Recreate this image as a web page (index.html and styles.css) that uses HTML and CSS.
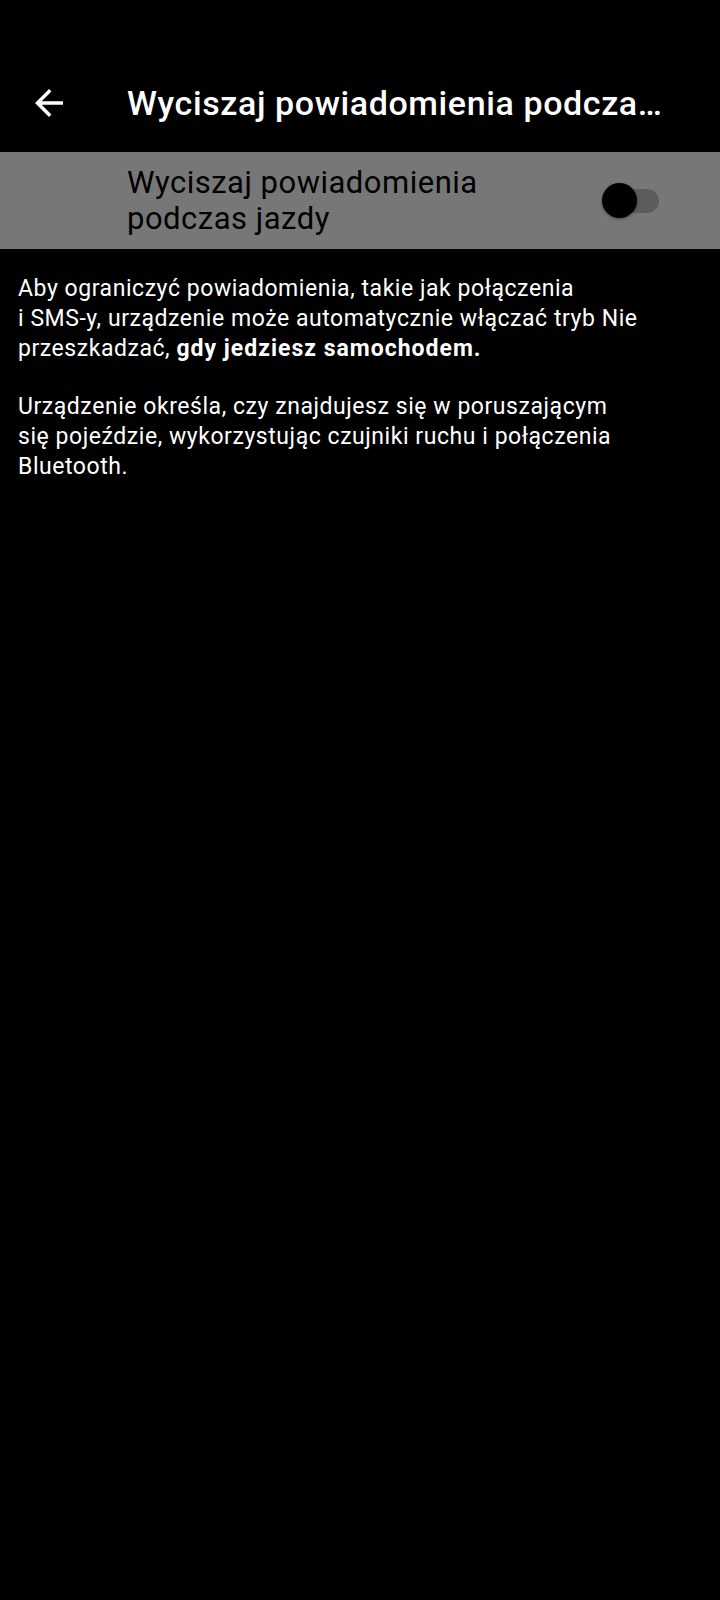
FILE: index.html
```html
<!DOCTYPE html>
<html lang="pl">
<head>
<meta charset="utf-8">
<title>Wyciszaj powiadomienia podczas jazdy</title>
<link rel="stylesheet" href="styles.css">
</head>
<body>
<div class="status"></div>
<header class="toolbar">
  <button class="back" aria-label="Wstecz">
    <svg viewBox="0 0 24 24" width="42" height="42"><path d="M20 11H7.83l5.59-5.59L12 4l-8 8 8 8 1.41-1.41L7.83 13H20v-2z" fill="#fff"/></svg>
  </button>
  <h1 class="title">Wyciszaj powiadomienia podczas jazdy</h1>
</header>
<section class="band">
  <div class="band-label">Wyciszaj powiadomienia<br>podczas jazdy</div>
  <div class="switch"><div class="thumb"></div></div>
</section>
<main class="desc">
  <p>Aby ograniczyć powiadomienia, takie jak połączenia<br>i SMS-y, urządzenie może automatycznie włączać tryb Nie<br>przeszkadzać, <b>gdy jedziesz samochodem.</b></p>
  <p>Urządzenie określa, czy znajdujesz się w poruszającym<br>się pojeździe, wykorzystując czujniki ruchu i połączenia<br>Bluetooth.</p>
</main>
</body>
</html>
```
FILE: styles.css
```css
html, body {
  margin: 0;
  padding: 0;
  background: #000;
  font-family: Roboto, "Noto Sans", sans-serif;
  color: #fff;
}
.status {
  height: 54px;
}
.toolbar {
  height: 98px;
  display: flex;
  align-items: center;
  padding-left: 28px;
  padding-right: 50px;
}
.back {
  width: 42px;
  height: 42px;
  padding: 0;
  margin: 0;
  border: 0;
  background: none;
  display: flex;
  flex-shrink: 0;
}
.title {
  margin: 0 0 0 57px;
  flex: 1;
  min-width: 0;
  font-size: 34px;
  font-weight: 500;
  letter-spacing: 0.6px;
  line-height: 40px;
  white-space: nowrap;
  overflow: hidden;
  text-overflow: ellipsis;
}
.band {
  height: 97px;
  background: #777;
  display: flex;
  align-items: center;
  padding-left: 127px;
  padding-right: 61px;
}
.band-label {
  flex: 1;
  font-size: 31px;
  letter-spacing: 0.5px;
  line-height: 36px;
  color: #000;
}
.switch {
  position: relative;
  width: 52px;
  height: 24px;
  border-radius: 12px;
  background: #5c5c5c;
}
.thumb {
  position: absolute;
  left: -5px;
  top: -5.5px;
  width: 35px;
  height: 35px;
  border-radius: 50%;
  background: #000;
  box-shadow: 0 1px 3px rgba(0,0,0,0.4);
}
.desc {
  padding: 25px 18px 0;
  font-size: 23px;
  letter-spacing: 0.55px;
  line-height: 30px;
}
.desc p {
  margin: 0 0 28px;
}
.desc b {
  font-weight: 700;
  letter-spacing: 1px;
}
```
